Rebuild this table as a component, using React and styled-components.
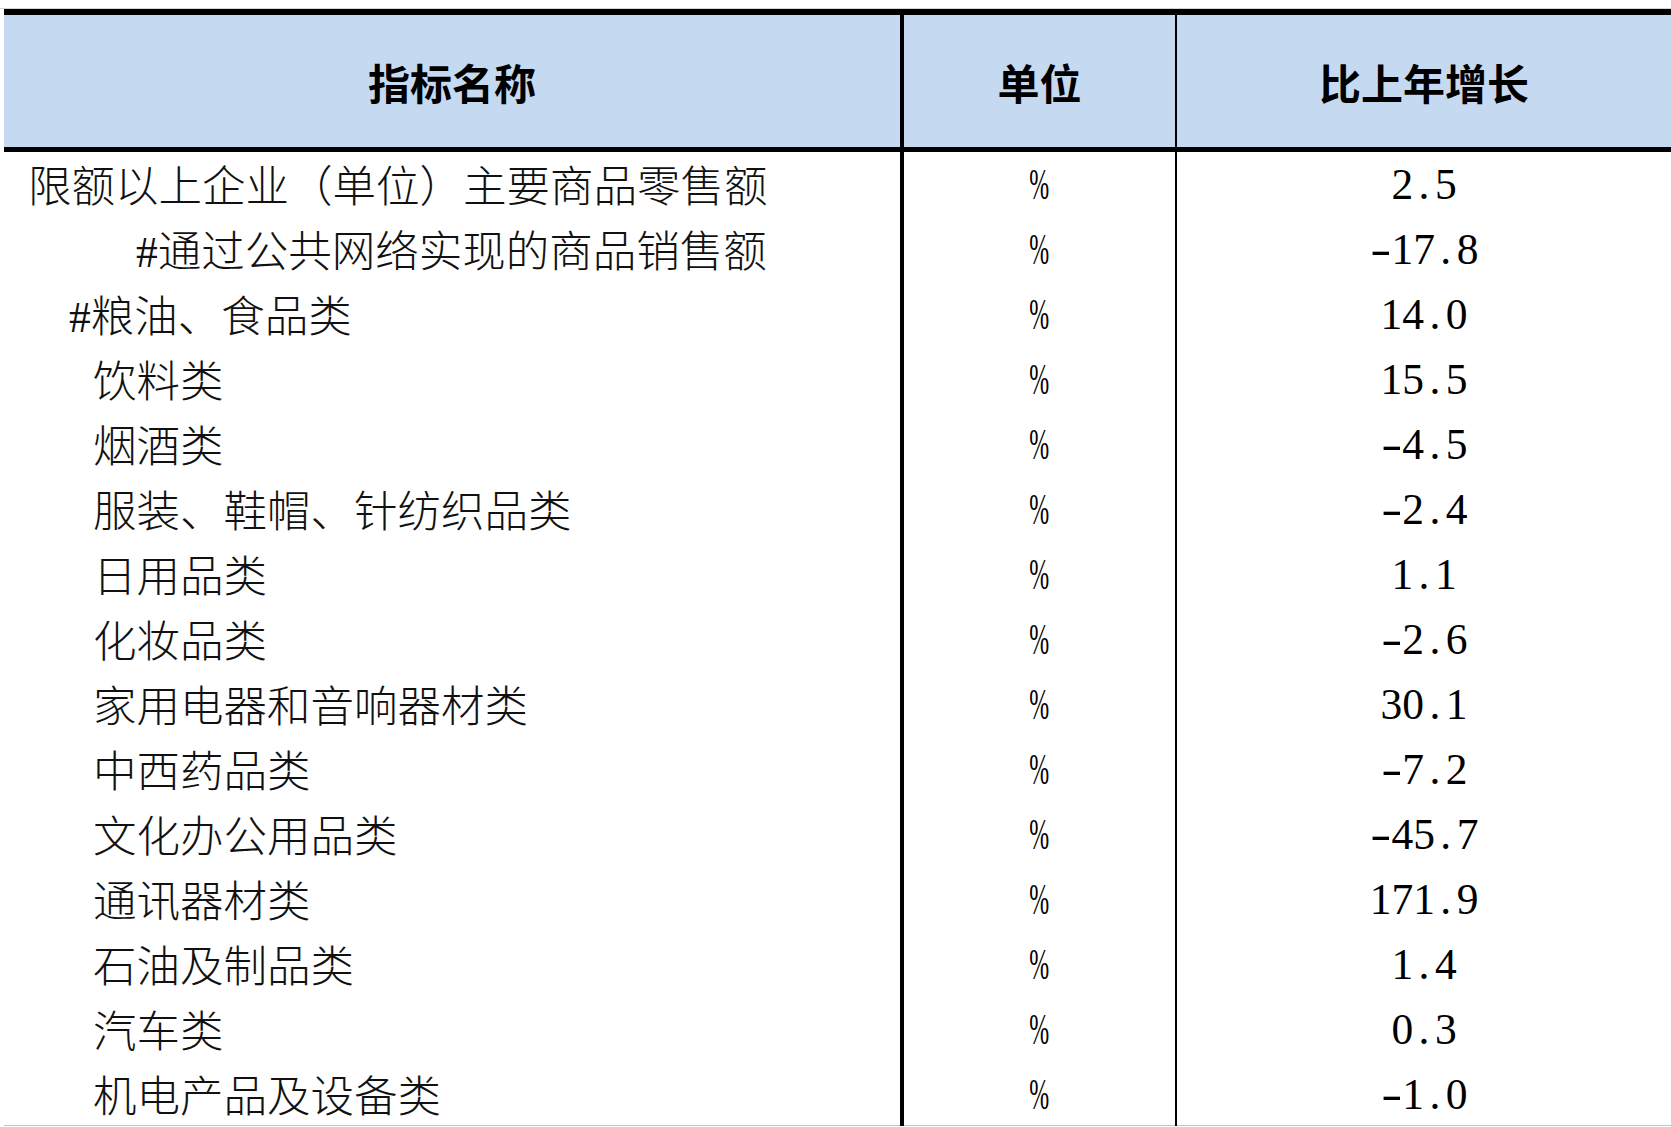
import React from "react";
import styled, { createGlobalStyle } from "styled-components";

const GlobalStyle = createGlobalStyle`
  html, body {
    margin: 0;
    padding: 0;
    background: #ffffff;
    overflow: hidden;
  }
`;

// Page: thin grey rule on top, table inset by 4px on the left
const Page = styled.div`
  padding-top: 8px;
  width: 1671px;
`;

const TopRule = styled.div`
  height: 1px;
  background-color: #d4d4d4;
`;

const Table = styled.div`
  margin-left: 4px;
  border-top: 6px solid #000;
  border-bottom: 1px solid #c4c4c4;
`;

const Row = styled.div`
  display: grid;
  grid-template-columns: 900px 273px 1fr;
  height: ${(p) => p.$height}px;
`;

const HeadCell = styled.div`
  display: flex;
  align-items: center;
  justify-content: center;
  box-sizing: border-box;
  background-color: #c5d9f1;
  border-bottom: 5px solid #000;
  border-right: ${(p) => p.$divider || 0}px solid #000;
  font-family: "Noto Sans CJK SC", sans-serif;
  font-weight: 700;
  font-size: 42px;
  color: #000;
`;

const NameCell = styled.div`
  display: flex;
  align-items: center;
  box-sizing: border-box;
  padding-left: ${(p) => p.$indent}px;
  padding-bottom: 3px;
  border-right: 4px solid #000;
  font-family: "Liberation Serif", "Noto Sans CJK SC", serif;
  font-weight: 300;
  font-size: 43.5px;
  color: #111;
  white-space: nowrap;
`;

const ValueCell = styled.div`
  display: flex;
  align-items: center;
  justify-content: center;
  box-sizing: border-box;
  padding-bottom: 2px;
  border-right: ${(p) => p.$divider || 0}px solid #000;
  font-family: "Liberation Serif", serif;
  font-size: 43.5px;
  color: #000;
  white-space: nowrap;
`;

// SimSun-like half-width glyphs
const Dot = styled.span`
  display: inline-block;
  width: 0.5em;
  text-align: center;
`;

const Minus = styled.span`
  display: inline-block;
  width: 0.5em;
  text-align: center;
  transform: scaleX(1.45);
`;

const Pct = styled.span`
  display: inline-block;
  transform: scaleX(0.55);
`;

const rows = [
  { name: "限额以上企业（单位）主要商品零售额", indent: 24, value: "2.5" },
  { name: "#通过公共网络实现的商品销售额", indent: 132, value: "-17.8" },
  { name: "#粮油、食品类", indent: 65, value: "14.0" },
  { name: "饮料类", indent: 89, value: "15.5" },
  { name: "烟酒类", indent: 89, value: "-4.5" },
  { name: "服装、鞋帽、针纺织品类", indent: 89, value: "-2.4" },
  { name: "日用品类", indent: 89, value: "1.1" },
  { name: "化妆品类", indent: 89, value: "-2.6" },
  { name: "家用电器和音响器材类", indent: 89, value: "30.1" },
  { name: "中西药品类", indent: 89, value: "-7.2" },
  { name: "文化办公用品类", indent: 89, value: "-45.7" },
  { name: "通讯器材类", indent: 89, value: "171.9" },
  { name: "石油及制品类", indent: 89, value: "1.4" },
  { name: "汽车类", indent: 89, value: "0.3" },
  { name: "机电产品及设备类", indent: 89, value: "-1.0" },
];

const Num = ({ value }) => {
  const neg = value.startsWith("-");
  const [a, b] = (neg ? value.slice(1) : value).split(".");
  return (
    <span>
      {neg && <Minus>-</Minus>}
      {a}
      <Dot>.</Dot>
      {b}
    </span>
  );
};

export default function App() {
  return (
    <Page>
      <GlobalStyle />
      <TopRule />
      <Table>
        <Row $height={137}>
          <HeadCell $divider={4}>指标名称</HeadCell>
          <HeadCell $divider={2}>单位</HeadCell>
          <HeadCell>比上年增长</HeadCell>
        </Row>
        {rows.map((r, i) => (
          <Row key={r.name} $height={i === rows.length - 1 ? 63 : 65}>
            <NameCell $indent={r.indent}>{r.name}</NameCell>
            <ValueCell $divider={2}>
              <Pct>%</Pct>
            </ValueCell>
            <ValueCell>
              <Num value={r.value} />
            </ValueCell>
          </Row>
        ))}
      </Table>
    </Page>
  );
}
